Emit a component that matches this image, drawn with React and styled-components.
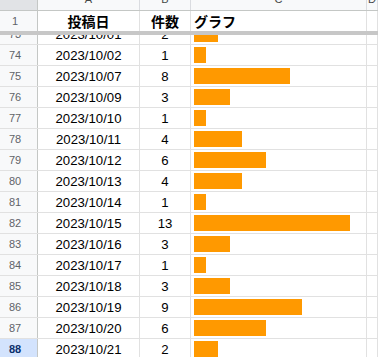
import React from 'react';
import styled, { createGlobalStyle } from 'styled-components';

const GlobalStyle = createGlobalStyle`
  html, body {
    margin: 0;
    padding: 0;
    background: #fff;
    overflow: hidden;
  }
  body {
    font-family: "Liberation Sans", Arial, "Noto Sans CJK JP", sans-serif;
  }
`;

const COLS = '38px 102px 51px 176px 1fr';

const Sheet = styled.div`
  width: 378px;
  height: 357px;
  overflow: hidden;
  display: flex;
  flex-direction: column;
`;

const LetterRow = styled.div`
  display: grid;
  grid-template-columns: ${COLS};
  height: 10px;
  overflow: hidden;
  border-bottom: 1px solid #c4c7c5;
  flex-shrink: 0;
`;

const LetterCell = styled.div`
  display: flex;
  align-items: flex-start;
  justify-content: center;
  overflow: hidden;
  background: ${(p) => (p.$corner ? '#e1e3e6' : '#f8f9fa')};
  border-right: 1px solid ${(p) => (p.$corner ? '#c4c7c5' : '#dadce0')};
`;

const Letter = styled.span`
  display: block;
  margin-top: -6px;
  font-size: 11px;
  line-height: 11px;
  color: #444746;
`;

const Row = styled.div`
  display: grid;
  grid-template-columns: ${COLS};
  height: 20px;
  border-bottom: 1px solid #e1e1e1;
  flex-shrink: 0;
`;

const FrozenRow = styled(Row)`
  border-bottom: none;
`;

const FreezeBar = styled.div`
  height: 4px;
  background: #c7c7c7;
  flex-shrink: 0;
`;

const CutRow = styled.div`
  height: 10px;
  overflow: hidden;
  flex-shrink: 0;
  & > div {
    margin-top: -11px;
  }
`;

const RowHead = styled.div`
  display: flex;
  align-items: center;
  justify-content: center;
  padding-right: 7px;
  font-size: 11px;
  color: ${(p) => (p.$selected ? '#0b2f6b' : '#5f6368')};
  font-weight: ${(p) => (p.$selected ? 'bold' : 'normal')};
  background: ${(p) => (p.$selected ? '#d3e3fd' : '#f8f9fa')};
  border-right: 1px solid #c4c7c5;
`;

const Cell = styled.div`
  display: flex;
  align-items: center;
  justify-content: ${(p) => (p.$left ? 'flex-start' : 'center')};
  padding-left: ${(p) => (p.$left ? '3px' : '0')};
  font-size: ${(p) => (p.$head ? '14px' : '13.2px')};
  font-weight: ${(p) => (p.$head ? 'bold' : 'normal')};
  color: #000;
  border-right: 1px solid #e1e1e1;
  white-space: nowrap;
  overflow: hidden;
`;

const Bar = styled.div`
  height: 16px;
  background: #ff9900;
`;

const data = [
  [73, '2023/10/01', 2],
  [74, '2023/10/02', 1],
  [75, '2023/10/07', 8],
  [76, '2023/10/09', 3],
  [77, '2023/10/10', 1],
  [78, '2023/10/11', 4],
  [79, '2023/10/12', 6],
  [80, '2023/10/13', 4],
  [81, '2023/10/14', 1],
  [82, '2023/10/15', 13],
  [83, '2023/10/16', 3],
  [84, '2023/10/17', 1],
  [85, '2023/10/18', 3],
  [86, '2023/10/19', 9],
  [87, '2023/10/20', 6],
  [88, '2023/10/21', 2],
];

const DataRow = ({ num, date, count, selected }) => (
  <Row>
    <RowHead $selected={selected}>{num}</RowHead>
    <Cell>{date}</Cell>
    <Cell>{count}</Cell>
    <Cell $left>
      <Bar style={{ width: count * 12 }} />
    </Cell>
    <Cell />
  </Row>
);

export default function App() {
  const [first, ...rest] = data;
  return (
    <Sheet>
      <GlobalStyle />
      <LetterRow>
        <LetterCell $corner />
        <LetterCell><Letter>A</Letter></LetterCell>
        <LetterCell><Letter>B</Letter></LetterCell>
        <LetterCell><Letter>C</Letter></LetterCell>
        <LetterCell><Letter>D</Letter></LetterCell>
      </LetterRow>
      <FrozenRow>
        <RowHead>1</RowHead>
        <Cell $head>投稿日</Cell>
        <Cell $head>件数</Cell>
        <Cell $head $left>グラフ</Cell>
        <Cell />
      </FrozenRow>
      <FreezeBar />
      <CutRow>
        <DataRow num={first[0]} date={first[1]} count={first[2]} />
      </CutRow>
      {rest.map(([num, date, count]) => (
        <DataRow key={num} num={num} date={date} count={count} selected={num === 88} />
      ))}
    </Sheet>
  );
}
